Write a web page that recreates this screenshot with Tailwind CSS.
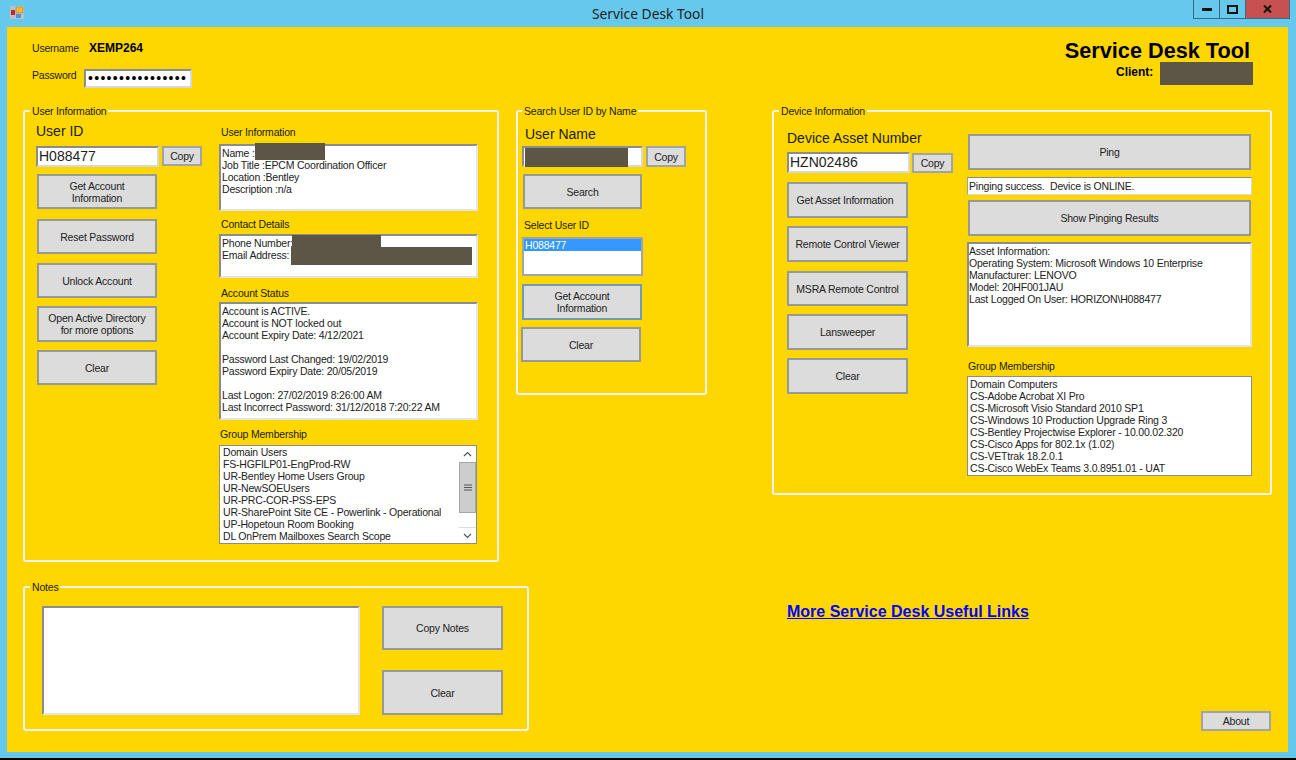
<!DOCTYPE html>
<html lang="en">
<head>
<meta charset="utf-8">
<title>Service Desk Tool</title>
<script src="https://cdn.jsdelivr.net/npm/@tailwindcss/browser@4"></script>
</head>
<body class="m-0 overflow-hidden bg-black">
<div class="w-[1296px] h-[760px] flex flex-col overflow-hidden bg-[#66c8ec] font-['Liberation_Sans',sans-serif] text-[10.5px] tracking-[-0.2px] leading-[14px] text-[#1c1c00] border-b-2 border-black">
  <!-- title bar -->
  <div class="h-[27px] shrink-0 flex items-start relative">
    <svg class="absolute left-[10px] top-[6px]" width="14" height="13" viewBox="0 0 14 13"><rect width="14" height="13" fill="#b5c4cc"/><rect x="6" y="1" width="7" height="6" fill="#f2b632" stroke="#b5862a" stroke-width="0.6"/><rect x="1" y="4" width="4" height="5" fill="#c5262a"/><rect x="6" y="8" width="5" height="4" fill="#5b8fdc"/></svg>
    <div class="w-full text-center pt-[4px] font-['Noto_Sans',sans-serif] text-[13.8px] tracking-normal leading-[19px] text-[#222]">Service Desk Tool</div>
    <div class="absolute left-[1193px] top-0 flex h-[19px]">
      <div class="w-[27px] border border-t-0 border-[#3c6a80] flex items-center justify-center"><svg width="10" height="3"><rect width="10" height="3" fill="#111"/></svg></div>
      <div class="w-[26px] border border-t-0 border-l-0 border-[#3c6a80] flex items-center justify-center"><svg width="11" height="9"><rect x="1" y="1" width="9" height="7" fill="none" stroke="#111" stroke-width="2"/></svg></div>
      <div class="w-[44px] border border-t-0 border-l-0 border-[#3c6a80] bg-[#c75050] flex items-center justify-center"><svg width="9" height="8"><path d="M1 0.5L8 7.5M8 0.5L1 7.5" stroke="#111" stroke-width="2" fill="none"/></svg></div>
    </div>
  </div>
  <!-- client area -->
  <div class="ml-[7px] w-[1281px] h-[725px] bg-[#ffd700] flex flex-col">
    <!-- header -->
    <div class="h-[77px] shrink-0 flex justify-between">
      <div class="pl-[25px] pt-[14px]">
        <div class="flex">
          <span class="w-[57px]">Username</span>
          <span class="font-bold text-[12px] tracking-normal text-black">XEMP264</span>
        </div>
        <div class="flex mt-[14px]">
          <span class="w-[52px] -mt-[1px]">Password</span>
          <div class="w-[108px] h-[19px] bg-white border-2 border-[#8c8c8c] border-b-[#d8d8d8] border-r-[#d8d8d8] pl-[2px] text-[14px] leading-[15px] tracking-[1.3px] text-black overflow-hidden whitespace-nowrap">••••••••••••••••</div>
        </div>
      </div>
      <div class="pr-[38px] pt-[12px] flex flex-col items-end">
        <div class="font-bold text-[21.7px] tracking-normal leading-[24px] text-black">Service Desk Tool</div>
        <div class="flex -mr-[3px] -mt-[1px]">
          <span class="font-bold text-[12px] tracking-normal mt-[3px] w-[44px] text-black">Client:</span>
          <div class="w-[93px] h-[23px] bg-[#5d5647]"></div>
        </div>
      </div>
    </div>

    <!-- top groups -->
    <div class="flex items-start pl-[16px] h-[458px] shrink-0">
      <fieldset class="w-[476px] h-[458px] border-2 border-[#f2f2f2] rounded-[3px] pl-[11px]">
        <legend class="-ml-[6px] px-[2px]">User Information</legend>
        <div class="flex gap-[17px]">
          <div class="w-[166px] pt-[4px]">
            <div class="text-[14px] tracking-normal leading-[18px] mb-[6px]">User ID</div>
            <div class="flex gap-[3px] items-start">
              <div class="w-[123px] h-[21px] bg-white border-2 border-[#8c8c8c] border-b-[#d8d8d8] border-r-[#d8d8d8] pl-[1px] text-[14px] tracking-normal leading-[17px] text-[#222]">H088477</div>
              <button class="w-[40px] h-[20px] bg-[#dcdcdc] border-2 border-[#a3a3a3] text-[#222]">Copy</button>
            </div>
            <button class="block ml-[1px] mt-[7px] w-[120px] h-[35px] bg-[#dcdcdc] border-2 border-[#989898] text-[#222] leading-[12px]">Get Account<br>Information</button>
            <button class="block ml-[1px] mt-[10px] w-[120px] h-[35px] bg-[#dcdcdc] border-2 border-[#989898] text-[#222]">Reset Password</button>
            <button class="block ml-[1px] mt-[9px] w-[120px] h-[35px] bg-[#dcdcdc] border-2 border-[#989898] text-[#222]">Unlock Account</button>
            <button class="block ml-[1px] mt-[8px] w-[120px] h-[36px] bg-[#dcdcdc] border-2 border-[#989898] text-[#222] leading-[12px]">Open Active Directory<br>for more options</button>
            <button class="block ml-[1px] mt-[8px] w-[120px] h-[35px] bg-[#dcdcdc] border-2 border-[#989898] text-[#222]">Clear</button>
          </div>
          <div class="w-[259px] pt-[7px]">
            <div class="ml-[2px] mb-[5px]">User Information</div>
            <div class="relative h-[67px] bg-white border-2 border-[#8c8c8c] border-b-[#e4e4e4] border-r-[#e4e4e4] pl-[1px] pt-[1px] leading-[12px] whitespace-pre text-[#222]">Name :
Job Title :EPCM Coordination Officer
Location :Bentley
Description :n/a<div class="absolute left-[34px] -top-[3px] w-[70px] h-[17px] bg-[#5d5647]"></div></div>
            <div class="ml-[2px] mt-[6px] mb-[3px]">Contact Details</div>
            <div class="relative h-[44px] bg-white border-2 border-[#8c8c8c] border-b-[#e4e4e4] border-r-[#e4e4e4] pl-[1px] pt-[1px] leading-[12px] whitespace-pre text-[#222]">Phone Number:
Email Address:<div class="absolute left-[71px] -top-[1px] w-[89px] h-[12px] bg-[#5d5647]"></div><div class="absolute left-[70px] top-[11px] w-[181px] h-[18px] bg-[#5d5647]"></div></div>
            <div class="ml-[2px] mt-[8px] mb-[2px]">Account Status</div>
            <div class="h-[118px] bg-white border-2 border-[#8c8c8c] border-b-[#e4e4e4] border-r-[#e4e4e4] pl-[1px] pt-[1px] leading-[12px] whitespace-pre text-[#222]">Account is ACTIVE.
Account is NOT locked out
Account Expiry Date: 4/12/2021

Password Last Changed: 19/02/2019
Password Expiry Date: 20/05/2019

Last Logon: 27/02/2019 8:26:00 AM
Last Incorrect Password: 31/12/2018 7:20:22 AM</div>
            <div class="ml-[1px] mt-[7px] mb-[4px]">Group Membership</div>
            <div class="w-[258px] h-[99px] bg-white border border-[#8c8c8c] flex justify-between">
              <div class="pl-[3px] leading-[12px] whitespace-pre text-[#222] overflow-hidden">Domain Users
FS-HGFILP01-EngProd-RW
UR-Bentley Home Users Group
UR-NewSOEUsers
UR-PRC-COR-PSS-EPS
UR-SharePoint Site CE - Powerlink - Operational
UP-Hopetoun Room Booking
DL OnPrem Mailboxes Search Scope</div>
              <div class="w-[17px] shrink-0 flex flex-col">
                <div class="h-[16px] flex items-center justify-center bg-white"><svg width="9" height="6"><path d="M1 5L4.5 1.5L8 5" fill="none" stroke="#555" stroke-width="1.2"/></svg></div>
                <div class="h-[51px] bg-[#cdcdcd] border border-[#a6a6a6] flex items-center justify-center"><svg width="8" height="7"><path d="M0 1H8M0 3.5H8M0 6H8" stroke="#555" stroke-width="1"/></svg></div>
                <div class="flex-1 bg-white"></div>
                <div class="h-[16px] flex items-center justify-center bg-white border-t border-[#ddd]"><svg width="9" height="6"><path d="M1 1L4.5 4.5L8 1" fill="none" stroke="#555" stroke-width="1.2"/></svg></div>
              </div>
            </div>
          </div>
        </div>
      </fieldset>

      <fieldset class="ml-[17px] w-[191px] h-[291px] border-2 border-[#f2f2f2] rounded-[3px] pl-[4px]">
        <legend class="ml-0 px-[2px]">Search User ID by Name</legend>
        <div class="pt-[7px]">
          <div class="ml-[3px] text-[14px] tracking-normal leading-[18px] mb-[3px]">User Name</div>
          <div class="flex gap-[3px] items-start">
            <div class="relative w-[121px] h-[21px] bg-white border-2 border-[#8c8c8c] border-b-[#d8d8d8] border-r-[#d8d8d8]"><div class="absolute left-[1px] top-0 w-[103px] h-[19px] bg-[#5d5647]"></div></div>
            <button class="w-[40px] h-[21px] bg-[#dcdcdc] border-2 border-[#a3a3a3] text-[#222]">Copy</button>
          </div>
          <button class="block ml-[1px] mt-[7px] w-[119px] h-[35px] bg-[#dcdcdc] border-2 border-[#989898] text-[#222]">Search</button>
          <div class="ml-[2px] mt-[9px]">Select User ID</div>
          <div class="mt-[5px] w-[121px] h-[39px] bg-white border-2 border-[#a3a3a3] leading-[12px] pl-0">
            <div class="bg-[#3399ff] text-white pl-[1px] h-[12px]">H088477</div>
          </div>
          <button class="block mt-[8px] w-[120px] h-[36px] bg-[#dcdcdc] border-2 border-[#6f9db5] text-[#222] leading-[12px]">Get Account<br>Information</button>
          <button class="block -ml-[1px] mt-[7px] w-[120px] h-[35px] bg-[#dcdcdc] border-2 border-[#989898] text-[#222]">Clear</button>
        </div>
      </fieldset>

      <fieldset class="ml-[65px] w-[500px] h-[391px] border-2 border-[#f2f2f2] rounded-[3px] pl-[13px]">
        <legend class="-ml-[8px] px-[2px]">Device Information</legend>
        <div class="flex gap-[14px]">
          <div class="w-[166px] pt-[11px]">
            <div class="text-[14px] tracking-normal leading-[18px] mb-[5px]">Device Asset Number</div>
            <div class="flex gap-[2px] items-start">
              <div class="w-[123px] h-[21px] bg-white border-2 border-[#8c8c8c] border-b-[#d8d8d8] border-r-[#d8d8d8] pl-[1px] text-[14px] tracking-normal leading-[17px] text-[#222]">HZN02486</div>
              <button class="mt-[1px] w-[41px] h-[20px] bg-[#dcdcdc] border-2 border-[#a3a3a3] text-[#222]">Copy</button>
            </div>
            <button class="block mt-[9px] w-[121px] h-[36px] pr-[5px] bg-[#dcdcdc] border-2 border-[#989898] text-[#222]">Get Asset Information</button>
            <button class="block mt-[8px] w-[121px] h-[36px] bg-[#dcdcdc] border-2 border-[#989898] text-[#222]">Remote Control Viewer</button>
            <button class="block mt-[9px] w-[121px] h-[35px] bg-[#dcdcdc] border-2 border-[#989898] text-[#222]">MSRA Remote Control</button>
            <button class="block mt-[8px] w-[121px] h-[36px] bg-[#dcdcdc] border-2 border-[#989898] text-[#222]">Lansweeper</button>
            <button class="block mt-[8px] w-[121px] h-[36px] bg-[#dcdcdc] border-2 border-[#989898] text-[#222]">Clear</button>
          </div>
          <div class="w-[285px] pt-[16px]">
            <button class="block ml-[1px] w-[283px] h-[36px] bg-[#dcdcdc] border-2 border-[#989898] text-[#222]">Ping</button>
            <div class="mt-[7px] h-[18px] bg-white border border-[#d8d8d8] border-t-[#8c8c8c] border-l-[#a0a0a0] pl-[1px] leading-[16px] whitespace-pre text-[#222]">Pinging success.  Device is ONLINE.</div>
            <button class="block ml-[1px] mt-[5px] w-[283px] h-[36px] bg-[#dcdcdc] border-2 border-[#989898] text-[#222]">Show Pinging Results</button>
            <div class="mt-[6px] h-[105px] bg-white border-2 border-[#8c8c8c] border-b-[#e4e4e4] border-r-[#e4e4e4] pt-[1px] leading-[12px] whitespace-pre text-[#222]">Asset Information:
Operating System: Microsoft Windows 10 Enterprise
Manufacturer: LENOVO
Model: 20HF001JAU
Last Logged On User: HORIZON\H088477</div>
            <div class="ml-[1px] mt-[12px] mb-[3px]">Group Membership</div>
            <div class="h-[100px] bg-white border border-[#8c8c8c] pl-[2px] pt-[1px] leading-[12px] whitespace-pre text-[#222]">Domain Computers
CS-Adobe Acrobat XI Pro
CS-Microsoft Visio Standard 2010 SP1
CS-Windows 10 Production Upgrade Ring 3
CS-Bentley Projectwise Explorer - 10.00.02.320
CS-Cisco Apps for 802.1x (1.02)
CS-VETtrak 18.2.0.1
CS-Cisco WebEx Teams 3.0.8951.01 - UAT</div>
          </div>
        </div>
      </fieldset>
    </div>

    <!-- bottom -->
    <div class="mt-[18px] ml-[16px] h-[151px] flex">
      <fieldset class="w-[506px] h-[151px] border-2 border-[#f2f2f2] rounded-[3px] pl-[17px]">
        <legend class="-ml-[12px] px-[2px]">Notes</legend>
        <div class="flex gap-[22px] pt-[12px]">
          <div class="w-[318px] h-[109px] bg-white border-2 border-[#8c8c8c] border-b-[#e4e4e4] border-r-[#e4e4e4]"></div>
          <div class="flex flex-col gap-[20px]">
            <button class="w-[121px] h-[44px] bg-[#dcdcdc] border-2 border-[#989898] text-[#222]">Copy Notes</button>
            <button class="w-[121px] h-[45px] bg-[#dcdcdc] border-2 border-[#989898] text-[#222]">Clear</button>
          </div>
        </div>
      </fieldset>
      <div class="flex-1 flex flex-col pr-[17px]">
        <a href="#" class="ml-[258px] mt-[23px] self-start font-bold text-[16px] tracking-normal leading-[18px] text-[#0000ff] underline">More Service Desk Useful Links</a>
        <button class="mt-auto self-end w-[70px] h-[20px] bg-[#dcdcdc] border-2 border-[#a3a3a3] text-[#222]">About</button>
      </div>
    </div>
  </div>
</div>
</body>
</html>
